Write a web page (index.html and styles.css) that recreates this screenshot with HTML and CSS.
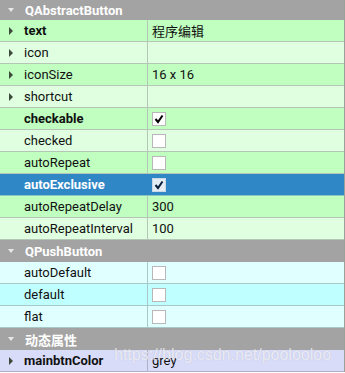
FILE: index.html
```html
<!DOCTYPE html>
<html>
<head>
<meta charset="utf-8">
<link rel="stylesheet" href="styles.css">
</head>
<body>
<div class="editor">
  <div class="group first"><span class="tri-down"></span><span class="glabel">QAbstractButton</span></div>
  <div class="row g1"><div class="name"><span class="tri-right"></span><b>text</b></div><div class="val">程序编辑</div></div>
  <div class="row g2"><div class="name"><span class="tri-right"></span>icon</div><div class="val"></div></div>
  <div class="row g1"><div class="name"><span class="tri-right"></span>iconSize</div><div class="val">16 x 16</div></div>
  <div class="row g2"><div class="name"><span class="tri-right"></span>shortcut</div><div class="val"></div></div>
  <div class="row g1"><div class="name"><b>checkable</b></div><div class="val"><span class="cb"><svg width="10" height="10" viewBox="0 0 10 10"><polyline points="1.5,5 4,8 8.5,1.5" fill="none" stroke="#000" stroke-width="2"/></svg></span></div></div>
  <div class="row g2"><div class="name">checked</div><div class="val"><span class="cb"></span></div></div>
  <div class="row g1"><div class="name">autoRepeat</div><div class="val"><span class="cb"></span></div></div>
  <div class="row sel"><div class="name"><b>autoExclusive</b></div><div class="val"><span class="cb"><svg width="10" height="10" viewBox="0 0 10 10"><polyline points="1.5,5 4,8 8.5,1.5" fill="none" stroke="#0a1e3c" stroke-width="2"/></svg></span></div></div>
  <div class="row g1"><div class="name">autoRepeatDelay</div><div class="val">300</div></div>
  <div class="row g2"><div class="name">autoRepeatInterval</div><div class="val">100</div></div>
  <div class="group"><span class="tri-down"></span><span class="glabel">QPushButton</span></div>
  <div class="row c2"><div class="name">autoDefault</div><div class="val"><span class="cb"></span></div></div>
  <div class="row c1"><div class="name">default</div><div class="val"><span class="cb"></span></div></div>
  <div class="row c2"><div class="name">flat</div><div class="val"><span class="cb"></span></div></div>
  <div class="group"><span class="tri-down"></span><span class="glabel">动态属性</span></div>
  <div class="row d1"><div class="name"><span class="tri-right"></span><b>mainbtnColor</b></div><div class="val">grey</div></div>
  <div class="watermark">https://blog.csdn.net/poolooloo</div>
</div>
</body>
</html>
```
FILE: styles.css
```css
html, body {
  margin: 0;
  padding: 0;
  background: #ffffff;
}
.editor {
  position: relative;
  width: 344px;
  border-right: 1px solid #9aa09a;
  font-family: Roboto, "Noto Sans CJK SC", sans-serif;
  font-size: 13px;
  color: #111;
  overflow: hidden;
}
.group {
  height: 22px;
  background: #a3a3a3;
  display: flex;
  align-items: center;
  color: #fff;
  font-weight: bold;
  font-size: 13px;
}
.group.first {
  height: 20px;
}
.glabel {
  margin-left: 11px;
}
.tri-down {
  width: 0;
  height: 0;
  margin-left: 8px;
  border-left: 3px solid transparent;
  border-right: 3px solid transparent;
  border-top: 4px solid #e8e8e8;
}
.row {
  display: grid;
  grid-template-columns: 148px 1fr;
  height: 22px;
  box-sizing: border-box;
  border-bottom: 1px solid #b6c6b6;
  font-size: 13px;
}
.name, .val {
  display: flex;
  align-items: center;
  white-space: nowrap;
}
.name {
  padding-left: 24px;
  position: relative;
  border-right: 1px solid #b6c6b6;
}
.val {
  padding-left: 4px;
}
.tri-right {
  position: absolute;
  left: 9px;
  top: 7px;
  width: 0;
  height: 0;
  border-top: 4px solid transparent;
  border-bottom: 4px solid transparent;
  border-left: 4px solid #3c4a3c;
}
.g1 { background: #c0ffc0; }
.g2 { background: #e0ffe0; }
.c1 { background: #c0ffff; border-bottom-color: #a8c8c8; }
.c2 { background: #e0ffff; border-bottom-color: #a8c8c8; }
.c1 .name, .c2 .name { border-right-color: #a8c8c8; }
.d1 { background: #d8dcf8; border-bottom-color: #b0b0c8; }
.d1 .name { border-right-color: #b0b0c8; }
.sel {
  background: #2f87c6;
  color: #fff;
  border-bottom-color: #8cc4c0;
}
.sel .name { border-right-color: #2f87c6; }
.cb {
  width: 12px;
  height: 12px;
  background: #fff;
  border: 1px solid #b8b8b8;
  display: flex;
  align-items: center;
  justify-content: center;
}
.sel .cb {
  background: #e4ecf4;
  border-color: #c8d8e8;
}
.watermark {
  position: absolute;
  left: 114px;
  top: 346px;
  font-family: "Liberation Sans", sans-serif;
  font-size: 16px;
  color: rgba(255, 255, 255, 0.7);
  text-shadow: 0 0 1px rgba(120, 120, 140, 0.35);
  pointer-events: none;
}
```
